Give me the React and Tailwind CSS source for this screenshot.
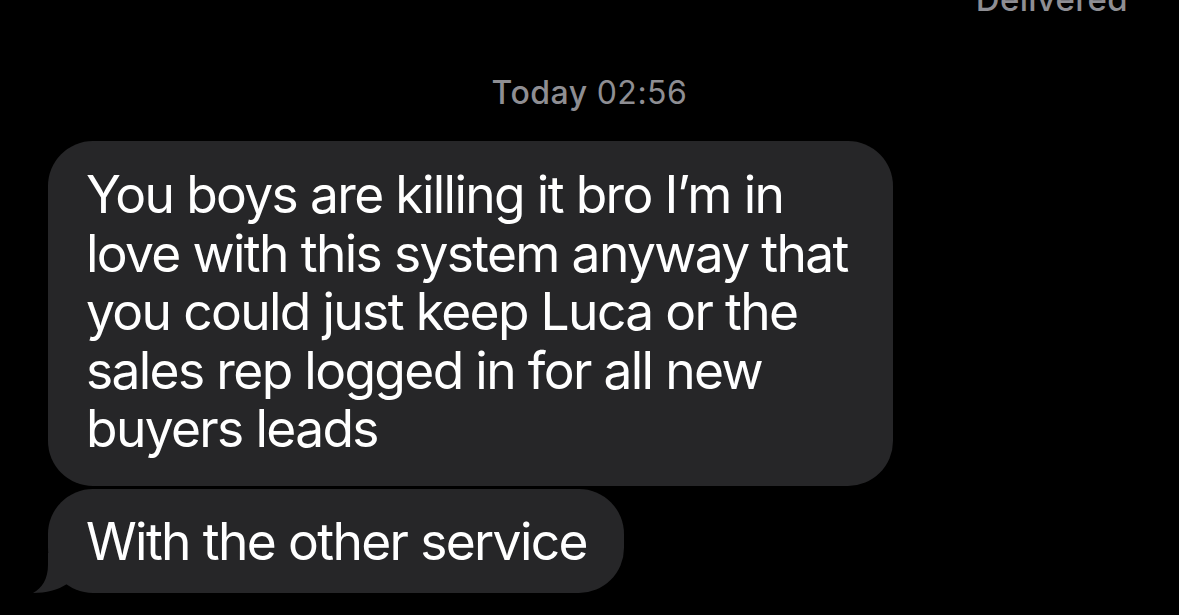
export default function App() {
  const font = { fontFamily: 'Inter, "Noto Sans", sans-serif' };
  return (
    <div className="w-[1179px] h-[615px] bg-black overflow-hidden relative" style={font}>
      <div className="flex justify-end pr-[51px] mt-[-19px] h-[36px] text-[33px] leading-[36px] text-[#8e8e93] font-medium tracking-[0.3px]">
        Delivered
      </div>
      <div className="flex justify-center mt-[58px] h-[36px] text-[32px] leading-[36px] text-[#8e8e93] tracking-[0.5px]">
        <span className="font-medium">Today</span>
        <span className="ml-[9px]">02:56</span>
      </div>
      <div className="flex flex-col items-start pl-[48px] mt-[30px] gap-[3px]">
        <div className="w-[845px] h-[345px] rounded-[45px] bg-[#262628] pl-[38px] pt-[24px] text-white text-[51.5px] leading-[58.5px] tracking-[-1.65px]">
          <div>You boys are killing it bro I’m in</div>
          <div>love with this system anyway that</div>
          <div>you could just keep Luca or the</div>
          <div>sales rep logged in for all new</div>
          <div>buyers leads</div>
        </div>
        <div className="relative w-[576px] h-[104px] rounded-[45px] bg-[#262628] pl-[38px] pt-[23px] text-white text-[51.5px] leading-[58.5px] tracking-[-1.65px]">
          <svg className="absolute left-[-15px] bottom-0" width="40" height="40" viewBox="0 0 40 40">
            <path d="M15 0 L15 12 C15 26 9 35 0 40 C13 40 25 37 34 31 L34 0 Z" fill="#262628" />
          </svg>
          <span className="relative">With the other service</span>
        </div>
      </div>
    </div>
  );
}
